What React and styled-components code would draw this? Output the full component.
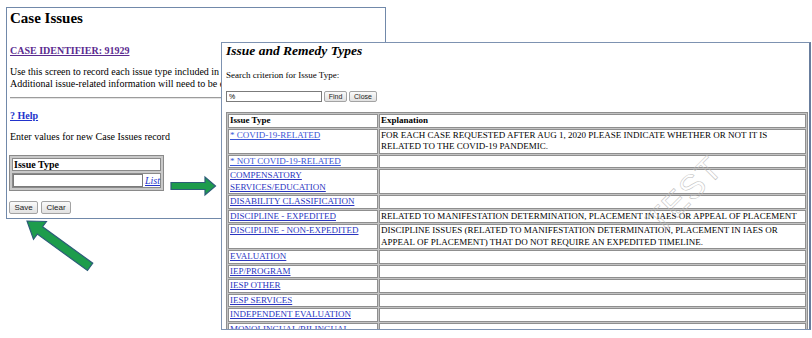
import React from "react";
import styled, { createGlobalStyle } from "styled-components";

const SERIF = `"Liberation Serif", "Times New Roman", serif`;
const SANS = `"Liberation Sans", Arial, sans-serif`;

const Global = createGlobalStyle`
  html, body { margin: 0; padding: 0; background: #fff; }
  body { font-family: ${SERIF}; color: #000; }
  * { box-sizing: border-box; }
`;

const Desktop = styled.div`
  position: relative;
  width: 812px;
  height: 338px;
  overflow: hidden;
  background: #fff;
  font-family: ${SERIF};
`;

const MainWindow = styled.section`
  position: absolute;
  left: 6px;
  top: 7px;
  width: 380px;
  height: 212px;
  border: 1px solid #7189aa;
  padding: 0 0 0 3px;
  overflow: hidden;
  background: #fff;
`;

const Title = styled.h1`
  margin: 2px 0 0;
  font-family: ${SERIF};
  font-size: 15px;
  line-height: 17px;
  font-weight: bold;
`;

const Line = styled.p`
  margin: ${(p) => p.$mt || 0}px 0 0;
  font-family: ${SERIF};
  font-size: 10px;
  line-height: 11.5px;
  white-space: nowrap;
`;

const Link = styled.a`
  color: ${(p) => p.$color || "#2233cc"};
  text-decoration: underline;
  font-weight: ${(p) => (p.$bold ? "bold" : "normal")};
  font-style: ${(p) => (p.$italic ? "italic" : "normal")};
  cursor: pointer;
`;

const Rule = styled.hr`
  margin: 8px 0 0;
  border: 0;
  border-top: 1px solid #9c9c9c;
  border-bottom: 1px solid #e4e4e4;
  height: 0;
  width: 370px;
`;

const FormTable = styled.table`
  margin: 12.5px 0 0 -1px;
  width: 154px;
  border: 1px solid #8a8a8a;
  border-spacing: 2px;
  background: #c9c9c9;
`;

const FormHead = styled.th`
  text-align: left;
  font-family: ${SERIF};
  font-size: 10px;
  line-height: 11px;
  font-weight: bold;
  background: #fff;
  border: 1px solid #8a8a8a;
  padding: 0 0 0 1px;
`;

const FormCell = styled.td`
  background: #fff;
  border: 1px solid #8a8a8a;
  padding: 0;
  font-family: ${SERIF};
  font-size: 10px;
  line-height: 13px;
  height: 15px;
`;

const FormCellInner = styled.div`
  display: flex;
  align-items: center;
  gap: 2px;
`;

const TextInput = styled.input`
  width: ${(p) => p.$w}px;
  height: ${(p) => p.$h}px;
  border: 1px solid #7b7b7b;
  padding: 0 2px;
  margin: 0;
  font-family: ${SANS};
  font-size: 7px;
  background: #fff;
  outline: none;
`;

const ButtonRow = styled.div`
  display: flex;
  gap: ${(p) => p.$gap || 3}px;
  margin: ${(p) => p.$mt || 0}px 0 0 ${(p) => p.$ml || 0}px;
`;

const Btn = styled.button`
  width: ${(p) => p.$w}px;
  height: ${(p) => p.$h}px;
  padding: 0;
  margin: 0;
  font-family: ${SANS};
  font-size: ${(p) => p.$fs || 8}px;
  color: #222;
  background: linear-gradient(#fafafa, #e1e1e1);
  border: 1px solid #a3a3a3;
  border-radius: 2px;
  line-height: 1;
`;

const Popup = styled.section`
  position: absolute;
  left: 221px;
  top: 42px;
  width: 590px;
  height: 288px;
  border: 1px solid #7d92b1;
  border-right: 2px solid #687d9d;
  padding: 0 0 0 4px;
  background: #fff;
  overflow: hidden;
  z-index: 2;
`;

const PopupTitle = styled.h2`
  margin: 0;
  font-family: ${SERIF};
  font-size: 13.5px;
  line-height: 15px;
  font-weight: bold;
  font-style: italic;
`;

const SearchLabel = styled.p`
  margin: 11.5px 0 0;
  font-family: ${SERIF};
  font-size: 9px;
  line-height: 11px;
`;

const TypesTable = styled.table`
  margin-top: 10px;
  width: 582px;
  border: 1px solid #8f8f8f;
  border-spacing: 1px;
  background: #c4c4c4;
  table-layout: fixed;
`;

const Th = styled.th`
  text-align: left;
  font-family: ${SERIF};
  font-size: 9px;
  line-height: 11.5px;
  font-weight: bold;
  background: #fff;
  border: 1px solid #8f8f8f;
  padding: 0 1px;
  width: ${(p) => (p.$w ? p.$w + "px" : "auto")};
`;

const Td = styled.td`
  font-family: ${SERIF};
  font-size: 9px;
  line-height: 11.5px;
  background: #fff;
  border: 1px solid #8f8f8f;
  padding: 0 1px;
  vertical-align: top;
  white-space: pre-line;
`;

const TypeLink = styled.a`
  color: ${(p) => (p.$star ? "#3a55d6" : "#2a35bf")};
  text-decoration: underline;
`;

const Watermark = styled.span`
  position: absolute;
  left: 417px;
  top: 132px;
  font-family: ${SANS};
  font-size: 34px;
  color: transparent;
  -webkit-text-stroke: 0.5px #bdbdbd;
  transform: rotate(-45deg);
  pointer-events: none;
  letter-spacing: 1px;
`;

const ArrowSvg = styled.svg`
  position: absolute;
  left: ${(p) => p.$x}px;
  top: ${(p) => p.$y}px;
  z-index: 3;
  overflow: visible;
`;

const rows = [
  {
    t: "* COVID-19-RELATED",
    star: true,
    e: "FOR EACH CASE REQUESTED AFTER AUG 1, 2020 PLEASE INDICATE WHETHER OR NOT IT IS\nRELATED TO THE COVID-19 PANDEMIC.",
  },
  { t: "* NOT COVID-19-RELATED", star: true, e: "" },
  { t: "COMPENSATORY\nSERVICES/EDUCATION", e: "" },
  { t: "DISABILITY CLASSIFICATION", e: "" },
  {
    t: "DISCIPLINE - EXPEDITED",
    e: "RELATED TO MANIFESTATION DETERMINATION, PLACEMENT IN IAES OR APPEAL OF PLACEMENT",
  },
  {
    t: "DISCIPLINE - NON-EXPEDITED",
    e: "DISCIPLINE ISSUES (RELATED TO MANIFESTATION DETERMINATION, PLACEMENT IN IAES OR\nAPPEAL OF PLACEMENT) THAT DO NOT REQUIRE AN EXPEDITED TIMELINE.",
  },
  { t: "EVALUATION", e: "" },
  { t: "IEP/PROGRAM", e: "" },
  { t: "IESP OTHER", e: "" },
  { t: "IESP SERVICES", e: "" },
  { t: "INDEPENDENT EVALUATION", e: "" },
  { t: "MONOLINGUAL/BILINGUAL", e: "" },
  { t: "PLACEMENT", e: "" },
];

const ARROW_FILL = "#1d9c4c";
const ARROW_STROKE = "#2c5d78";

export default function App() {
  return (
    <>
      <Global />
      <Desktop>
        <MainWindow>
          <Title>Case Issues</Title>
          <Line $mt={18}>
            <Link $bold $color="#5a2b8f">CASE IDENTIFIER: 91929</Link>
          </Line>
          <Line $mt={9.5}>
            Use this screen to record each issue type included in the request for an impartial hearing.
            <br />
            Additional issue-related information will need to be entered on the following screens.
          </Line>
          <Rule />
          <Line $mt={11}>
            <Link $bold>? Help</Link>
          </Line>
          <Line $mt={9.5}>Enter values for new Case Issues record</Line>
          <FormTable>
            <tbody>
              <tr>
                <FormHead>Issue Type</FormHead>
              </tr>
              <tr>
                <FormCell>
                  <FormCellInner>
                    <TextInput $w={130} $h={13} />
                    <Link $italic>List</Link>
                  </FormCellInner>
                </FormCell>
              </tr>
            </tbody>
          </FormTable>
          <ButtonRow $mt={10} $ml={-1} $gap={3}>
            <Btn $w={29} $h={13} $fs={8}>Save</Btn>
            <Btn $w={30} $h={13} $fs={8}>Clear</Btn>
          </ButtonRow>
        </MainWindow>

        <Popup>
          <PopupTitle>Issue and Remedy Types</PopupTitle>
          <SearchLabel>Search criterion for Issue Type:</SearchLabel>
          <ButtonRow $mt={10.5} $gap={2}>
            <TextInput $w={96} $h={11} defaultValue="%" />
            <Btn $w={23} $h={11} $fs={7}>Find</Btn>
            <Btn $w={28} $h={11} $fs={7}>Close</Btn>
          </ButtonRow>
          <TypesTable>
            <tbody>
              <tr>
                <Th $w={150}>Issue Type</Th>
                <Th>Explanation</Th>
              </tr>
              {rows.map((r) => (
                <tr key={r.t}>
                  <Td>
                    <TypeLink $star={r.star}>{r.t}</TypeLink>
                  </Td>
                  <Td>{r.e || "\u00a0"}</Td>
                </tr>
              ))}
            </tbody>
          </TypesTable>
          <Watermark>TEST</Watermark>
        </Popup>

        <ArrowSvg $x={170} $y={175} width="48" height="22" viewBox="0 0 48 22">
          <path
            d="M1,7.5 H35 V2 L45.5,11 L35,20 V14.5 H1 Z"
            fill={ARROW_FILL}
            stroke={ARROW_STROKE}
            strokeWidth="1.2"
            strokeLinejoin="miter"
          />
        </ArrowSvg>

        <ArrowSvg $x={15} $y={210} width="95" height="70" viewBox="0 0 95 70">
          <g transform="translate(12 11) rotate(216)">
            <path
              d="M0,0 L-16,-11 L-16,-4.5 L-78,-4.5 L-78,4.5 L-16,4.5 L-16,11 Z"
              fill={ARROW_FILL}
              stroke={ARROW_STROKE}
              strokeWidth="1.2"
            />
          </g>
        </ArrowSvg>
      </Desktop>
    </>
  );
}
